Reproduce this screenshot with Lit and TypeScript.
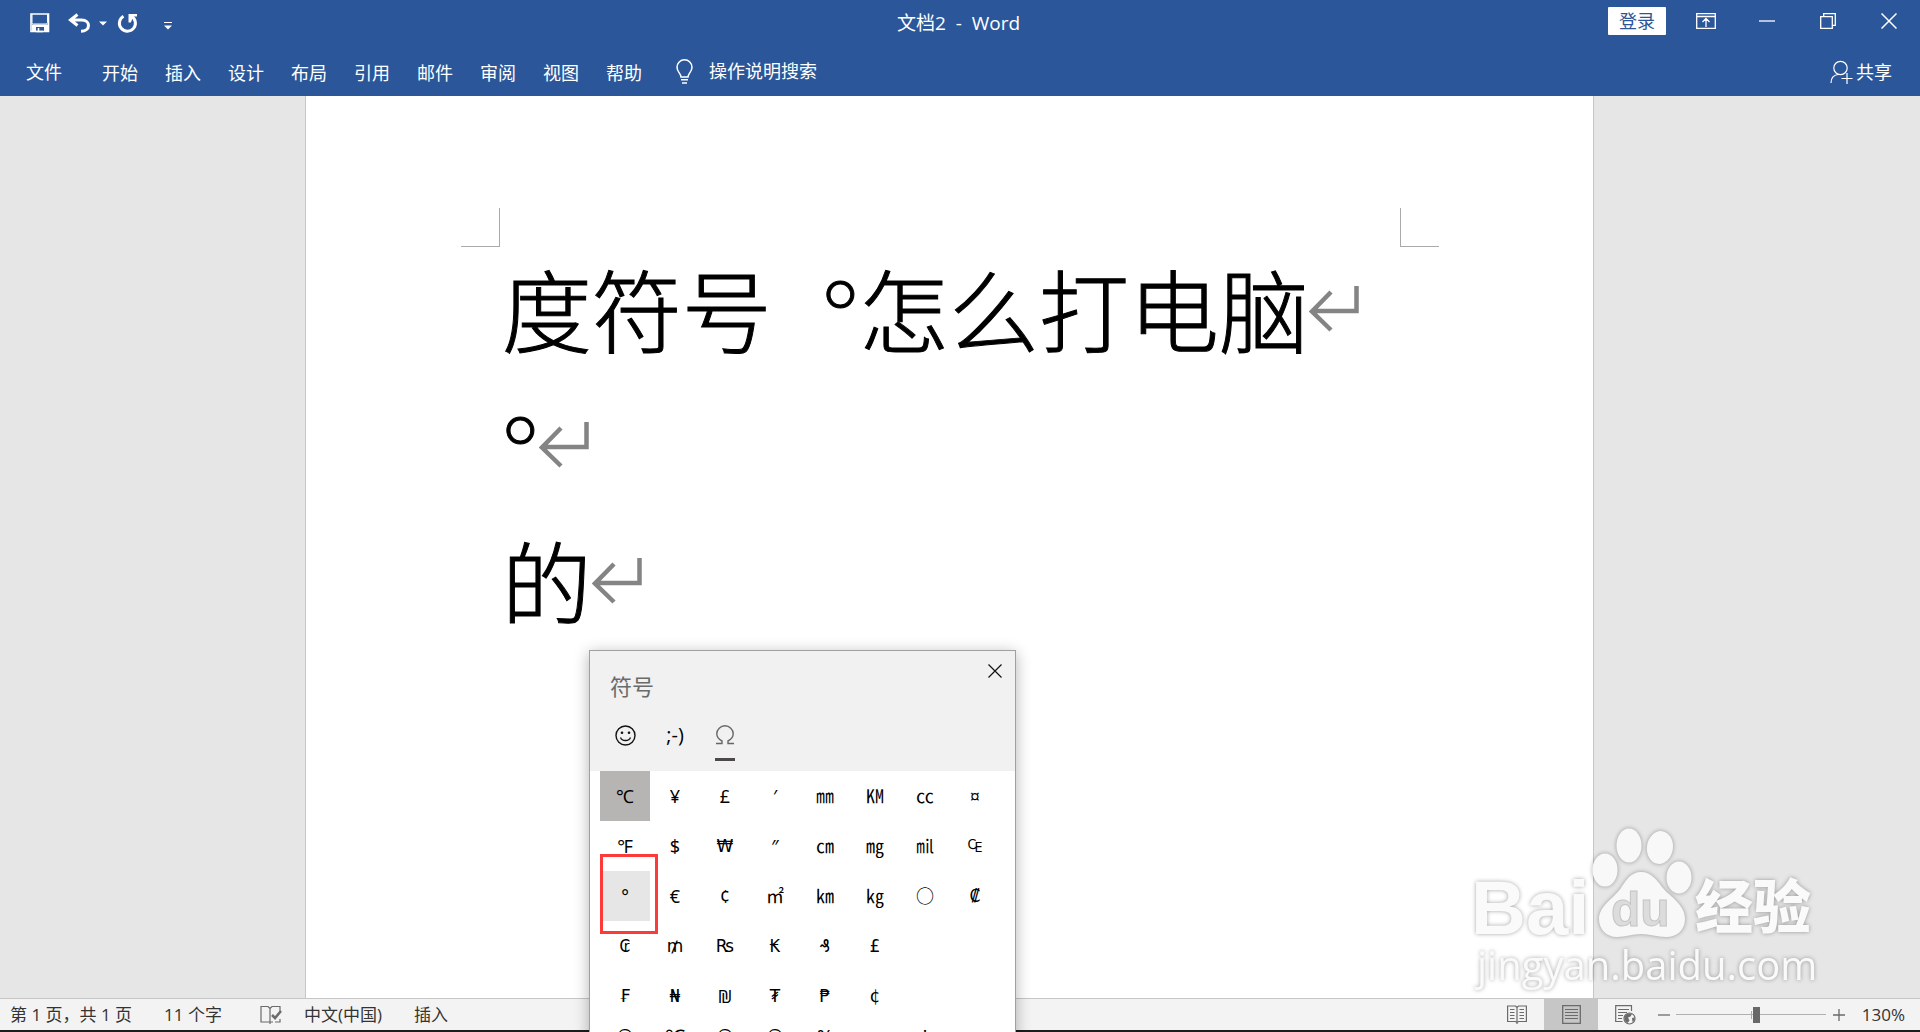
import { LitElement, html, css, svg } from "lit";
import { customElement, property } from "lit/decorators.js";
import { classMap } from "lit/directives/class-map.js";

const MENU = ["开始", "插入", "设计", "布局", "引用", "邮件", "审阅", "视图", "帮助"];

const SYMBOLS: string[][] = [
  ["℃", "¥", "£", "′", "㎜", "㏎", "㏄", "¤"],
  ["℉", "$", "₩", "″", "㎝", "㎎", "㏕", "₠"],
  ["°", "€", "¢", "㎡", "㎞", "㎏", "○", "₡"],
  ["₢", "₥", "₨", "₭", "₰", "£", "", ""],
  ["₣", "₦", "₪", "₮", "₱", "¢", "", ""],
];

const WIDE_SIGNS = "₩₠₡₢₥₨₭₰₣₦₮₱";

const MORE_SYMBOLS = ["©", "℃", "©", "®", "%", "", "'", ""];

const RETURN_MARK = svg`<path d="M47.5 0V25H4M22 6L3 25.5L22 44" fill="none" stroke="#848484" stroke-width="4.5"/>`;

/* Title bar, quick access tools and ribbon tab names */
@customElement("word-header")
export class WordHeader extends LitElement {
  static styles = css`
    :host { display: block; background: #2b579a; color: #fff; }
    button, a, input {
      font: inherit; color: inherit; background: none; border: 0; padding: 0; margin: 0; text-decoration: none;
    }
    button { display: flex; align-items: center; justify-content: center; }
    svg { display: block; fill: none; stroke: #fff; }
    .bar { display: grid; grid-template-columns: 1fr auto 1fr; height: 46px; align-items: center; }
    .quick { display: flex; align-items: center; padding-left: 30px; }
    .undo { margin-left: 18px; }
    .more { margin-left: 8px; }
    .redo { margin-left: 10px; }
    .custom { margin-left: 26px; padding-top: 6px; }
    .title { white-space: pre; font-size: 19px; font-weight: 400; margin: 0; padding-right: 3px; line-height: 24px; }
    .window { display: flex; align-items: center; justify-content: flex-end; height: 42px; align-self: start; padding-right: 1px; }
    .login { background: #fff; color: #2b579a; width: 58px; height: 28px; border-radius: 1px; margin-right: 9px; }
    .win { width: 61px; height: 42px; }
    .tabs { display: flex; height: 50px; align-items: center; padding: 0 28px 0 26px; }
    .menu { display: flex; gap: 27px; margin-left: 40px; padding-top: 4px; }
    .file { padding-top: 2px; }
    .menu a, .file { line-height: 26px; white-space: nowrap; }
    .search { display: flex; align-items: center; gap: 15px; margin-left: 33px; }
    .search input { width: 160px; height: 26px; outline: 0; }
    .search input::placeholder { color: #fff; opacity: 1; }
    .share { display: flex; align-items: center; gap: 3px; margin-left: auto; padding-top: 2px; }
  `;

  render() {
    return html`
      <header class="bar">
        <div class="quick">
          <button aria-label="保存">
            <svg width="20" height="20" viewBox="0 0 20 20">
              <path d="M1 1H18.5V18.5H1Z" stroke-width="1.6" />
              <path d="M2 1V9.500Q2 11 3.500 11H16Q17.500 11 17.500 9.500V1" stroke-width="1" />
              <path d="M2 11.500H18V19H14V14H6V19H2Z" fill="#fff" stroke="none" />
              <path d="M8.500 15V19M6 18.500H13" stroke-width="1.600" />
            </svg>
          </button>
          <button class="undo" aria-label="撤消">
            <svg width="23" height="20" viewBox="0 0 23 20">
              <path d="M9.500 1.500L2.500 7L9.500 12.500M3 7H13.500C18.500 7 20.500 10 20.500 12.500C20.500 16 17.500 18.200 13 18.200" stroke-width="3" />
            </svg>
          </button>
          <button class="more" aria-label="撤消选项">
            <svg width="8" height="5" viewBox="0 0 8 5"><path d="M0 .5H8L4 4.500Z" fill="#fff" stroke="none" /></svg>
          </button>
          <button class="redo" aria-label="重复">
            <svg width="21" height="21" viewBox="0 0 21 21">
              <path d="M6.500 3.200A8 8 0 1 0 14.500 3.300" stroke-width="3" />
              <path d="M11.500 1H20V3.500H16.500L13.800 9.500H11.500Z" fill="#fff" stroke="none" />
            </svg>
          </button>
          <button class="custom" aria-label="自定义快速访问工具栏">
            <svg width="8" height="8" viewBox="0 0 8 8">
              <path d="M0 .5H8" /><path d="M0 3.500H8L4 7.500Z" fill="#fff" stroke="none" />
            </svg>
          </button>
        </div>
        <h1 class="title">文档2  -  Word</h1>
        <div class="window">
          <button class="login">登录</button>
          <button class="win" aria-label="功能区显示选项">
            <svg width="20" height="16" viewBox="0 0 20 16">
              <path d="M.7.700H19.300V15.300H.7ZM.7 3.500H19.300M10 14V6M6.500 9L10 5.500L13.500 9" stroke-width="1.300" />
            </svg>
          </button>
          <button class="win" aria-label="最小化">
            <svg width="16" height="2" viewBox="0 0 16 2"><path d="M0 1H16" stroke-width="1.300" /></svg>
          </button>
          <button class="win" aria-label="还原">
            <svg width="16" height="16" viewBox="0 0 16 16">
              <path d="M.7 3.700H12.300V15.300H.7ZM3.700 3.500V.7H15.300V12.300H12.500" stroke-width="1.300" />
            </svg>
          </button>
          <button class="win" aria-label="关闭">
            <svg width="16" height="16" viewBox="0 0 16 16"><path d="M.5.500L15.500 15.500M15.500.5L.5 15.500" stroke-width="1.500" /></svg>
          </button>
        </div>
      </header>
      <nav class="tabs">
        <a class="file" href="#file">文件</a>
        <div class="menu">${MENU.map((m) => html`<a href="#tab">${m}</a>`)}</div>
        <label class="search">
          <svg width="19" height="25" viewBox="0 0 19 25">
            <path d="M6 18C6 14.500 2 13 2 8.300A7.500 7.500 0 0 1 17 8.300C17 13 13 14.500 13 18ZM6 20.700H13" stroke-width="1.500" />
            <path d="M7 24H12" stroke-width="1.500" />
          </svg>
          <input type="text" placeholder="操作说明搜索" aria-label="操作说明搜索" />
        </label>
        <button class="share">
          <svg width="23" height="24" viewBox="0 0 23 24">
            <circle cx="10.500" cy="8" r="6.700" stroke-width="1.200" />
            <path d="M1 23C1 18 4 15 8 14.500H13" stroke-width="1.200" />
            <path d="M17 13V24M11.500 18.500H22.500" stroke-width="1.200" />
          </svg>
          共享
        </button>
      </nav>
    `;
  }
}

/* White sheet with crop marks and the typed paragraphs */
@customElement("word-document")
export class WordDocument extends LitElement {
  static styles = css`
    :host { display: flex; justify-content: center; background: #e6e6e6; padding-right: 21px; overflow: hidden; }
    .page {
      box-sizing: border-box; width: 67.9%; background: #fff; border: solid #c6c6c6; border-width: 0 1px;
      padding: 112px 154px 0 155px;
    }
    .marks { display: flex; justify-content: space-between; }
    .mark { width: 38px; height: 38px; border: solid #aaa; border-width: 0 1px 1px 0; }
    .mark.right { border-width: 0 0 1px 1px; }
    .text { padding-left: 41px; }
    p {
      margin: 0; display: flex; align-items: flex-start; white-space: pre; color: #000;
      font: 300 90px/136px "Liberation Sans", "Noto Sans CJK SC", sans-serif;
      -webkit-text-stroke: 1px #000;
    }
    .deg { font-family: Lato, sans-serif; line-height: 1; }
    svg { display: block; flex: none; margin-top: 39px; }
  `;

  render() {
    const mark = html`<svg width="50" height="46" viewBox="0 0 50 46">${RETURN_MARK}</svg>`;
    const deg = html`<span class="deg">°</span>`;
    return html`
      <article class="page">
        <div class="marks"><span class="mark"></span><span class="mark right"></span></div>
        <div class="text">
          <p><span>度符号  ${deg}怎么打电脑</span>${mark}</p>
          <p><span>${deg}</span>${mark}</p>
          <p><span>的</span>${mark}</p>
        </div>
      </article>
    `;
  }
}

/* Bottom bar: page info, view switches, zoom */
@customElement("word-status")
export class WordStatus extends LitElement {
  static styles = css`
    :host {
      display: flex; align-items: stretch; height: 31px; background: #f3f3f3; color: #333;
      border-top: 1px solid #c6c6c6; border-bottom: 2px solid #1c1a1c; font-size: 17px; padding: 0 15px 0 10px;
    }
    button { font: inherit; color: inherit; background: none; border: 0; padding: 0; white-space: nowrap; }
    .info { display: flex; align-items: center; gap: 32px; }
    .proof { margin: 0 -10px 0 6px; }
    .tools { display: flex; align-items: stretch; margin-left: auto; }
    .view { width: 54px; display: flex; align-items: center; justify-content: center; }
    .view.on { background: #c6c6c6; }
    .small { width: 12px; margin: 0 6px 0 7px; display: flex; align-items: center; }
    .first { margin-left: 6px; }
    svg { display: block; fill: none; stroke: #6b6b6b; }
    input {
      appearance: none; width: 150px; height: 31px; margin: 0;
      background: linear-gradient(#aaa, #aaa) 75px 50% / 1px 8px no-repeat,
        linear-gradient(#b0b0b0, #b0b0b0) 0 50% / 100% 1px no-repeat;
    }
    input::-webkit-slider-thumb { appearance: none; width: 7px; height: 16px; background: #686868; }
    .zoom { margin-left: 10px; min-width: 44px; text-align: right; }
  `;

  render() {
    return html`
      <div class="info">
        <button>第 1 页，共 1 页</button>
        <button>11 个字</button>
        <button class="proof" aria-label="校对">
          <svg width="22" height="20" viewBox="0 0 22 20">
            <path d="M10 17H1V1.500H8L10 3.500V19M10 3.500L12 1.500H20V6M10 17H13M15 17H20V14" stroke-width="1.200" />
            <path d="M12 10L15 13L21 6" stroke-width="2.600" />
          </svg>
        </button>
        <button>中文(中国)</button>
        <button>插入</button>
      </div>
      <div class="tools">
        <button class="view" aria-label="阅读视图">
          <svg width="20" height="19" viewBox="0 0 20 19">
            <path d="M10 19V2.500M10 2.500L8.500 1H.6V16.500H8.500L10 17.500L11.500 16.500H19.400V1H11.500Z" stroke-width="1.200" />
            <path d="M3 4.500H7.500M3 7.500H7.500M3 10.500H7.500M3 13.500H7.500M12.500 4.500H17M12.500 7.500H17M12.500 10.500H17M12.500 13.500H17" stroke-width="1.200" />
          </svg>
        </button>
        <button class="view on" aria-label="页面视图">
          <svg width="19" height="19" viewBox="0 0 19 19">
            <path d="M.7.700H18.300V18.300H.7Z" stroke-width="1.300" />
            <path d="M3 4.500H16M3 7.500H16M3 10.500H16M3 13.500H16" stroke-width="1.200" />
          </svg>
        </button>
        <button class="view" aria-label="Web 版式视图">
          <svg width="21" height="20" viewBox="0 0 21 20">
            <path d="M7.500 16.500H.7V.7H16.500V6M3 4.500H14M3 7.500H12M3 10.500H8M3 13.500H7" stroke-width="1.200" />
            <circle cx="14.500" cy="13.500" r="5.500" stroke-width="1.200" />
            <path d="M9.500 12C11 8.500 14 8 17 9L15.500 11.500L13 12.500L14.500 15.500L12.500 18C10.500 17 9.200 14.500 9.500 12ZM17 13L19.500 12.500V15L17.500 17Z" fill="#6b6b6b" stroke="none" />
          </svg>
        </button>
        <button class="small first" aria-label="缩小">
          <svg width="12" height="12" viewBox="0 0 12 12"><path d="M0 6H12" stroke-width="1.300" /></svg>
        </button>
        <input type="range" min="0" max="100" value="54" aria-label="显示比例" />
        <button class="small" aria-label="放大">
          <svg width="12" height="12" viewBox="0 0 12 12"><path d="M0 6H12M6 0V12" stroke-width="1.300" /></svg>
        </button>
        <button class="zoom">130%</button>
      </div>
    `;
  }
}

/* Floating symbol picker */
@customElement("symbol-panel")
export class SymbolPanel extends LitElement {
  @property({ attribute: false }) rows: string[][] = SYMBOLS;

  static styles = css`
    :host {
      display: block; box-sizing: border-box; width: 427px; background: #fff; border: 1px solid #a0a0a0;
      box-shadow: 0 3px 14px rgba(0, 0, 0, 0.3); color: #000;
    }
    button { font: inherit; color: inherit; background: none; border: 0; padding: 0; }
    .head { background: #f1f1f1; height: 120px; display: flex; flex-direction: column; justify-content: space-between; }
    .top { display: flex; justify-content: space-between; align-items: flex-start; }
    h2 { margin: 19px 0 0 20px; font-size: 22px; line-height: 32px; font-weight: 400; color: #6a6a6a; }
    .close { width: 40px; height: 40px; display: grid; place-items: center; }
    .kinds { display: flex; padding-left: 10px; }
    .kind { width: 50px; height: 50px; display: flex; flex-direction: column; align-items: center; }
    .kind .pic { height: 28px; display: grid; place-items: center; font-size: 20px; }
    .kind.on::after { content: ""; width: 20px; height: 3px; margin-top: 9px; background: #4c4a48; }
    svg { display: block; fill: none; stroke: #111; }
    .grid {
      display: grid; grid-template-columns: repeat(8, 50px); grid-auto-rows: 50px; padding-left: 10px;
      font: 18px/50px "Noto Sans", "Noto Sans CJK SC", "DejaVu Sans", sans-serif;
    }
    .grid button { text-align: center; }
    .grid .picked { background: #b7b5b3; }
    .grid .hover { background: #e6e6e6; }
    .grid .wide { font-family: "DejaVu Sans", sans-serif; font-size: 17px; }
    .next { font-size: 20px; line-height: 32px; grid-auto-rows: 32px; }
  `;

  render() {
    return html`
      <div class="head">
        <div class="top">
          <h2>符号</h2>
          <button class="close" aria-label="关闭">
            <svg width="14" height="14" viewBox="0 0 14 14"><path d="M.5.500L13.500 13.500M13.500.5L.5 13.500" stroke-width="1.200" /></svg>
          </button>
        </div>
        <div class="kinds">
          <button class="kind" aria-label="表情">
            <span class="pic">
              <svg width="21" height="21" viewBox="0 0 21 21">
                <circle cx="10.500" cy="10.500" r="9.500" stroke-width="1.400" />
                <path d="M5.500 12.500C7 16.500 14 16.500 15.500 12.500" stroke-width="1.300" />
                <circle cx="7" cy="7.800" r="1.300" fill="#111" stroke="none" />
                <circle cx="14" cy="7.800" r="1.300" fill="#111" stroke="none" />
              </svg>
            </span>
          </button>
          <button class="kind" aria-label="颜文字"><span class="pic">;-)</span></button>
          <button class="kind on" aria-label="符号">
            <span class="pic">
              <svg width="20" height="20" viewBox="0 0 20 20">
                <path d="M1 18.500H7V16C4 14.500 1.800 12 1.800 8.800A8.200 8 0 0 1 18.200 8.800C18.200 12 16 14.500 13 16V18.500H19" stroke="#666" stroke-width="1.400" />
              </svg>
            </span>
          </button>
        </div>
      </div>
      <div class="grid">
        ${this.rows.map((row, r) =>
          row.map((s, c) =>
            s
              ? html`<button
                  class=${classMap({
                    picked: r === 0 && c === 0,
                    hover: r === 2 && c === 0,
                    wide: WIDE_SIGNS.includes(s) || (r > 2 && c === 5),
                  })}
                >${s}</button>`
              : html`<span></span>`
          )
        )}
      </div>
      <div class="grid next">
        ${MORE_SYMBOLS.map((s) => (s ? html`<button><span>${s}</span></button>` : html`<span></span>`))}
      </div>
    `;
  }
}

/* Translucent site badge */
@customElement("site-badge")
export class SiteBadge extends LitElement {
  static styles = css`
    :host { display: block; pointer-events: none; }
    svg { display: block; overflow: visible; filter: drop-shadow(0 0 2px rgba(0, 0, 0, 0.35)); }
    text { fill: #fafafa; }
    .brand { font: 700 76px "Liberation Sans", sans-serif; }
    .cn { font: 900 58px "Noto Sans CJK SC", sans-serif; }
    .url { font: 400 40px "Open Sans", sans-serif; }
    .du { font: 700 48px "Liberation Sans", sans-serif; fill: #dcdcdc; stroke: #c4c4c4; stroke-width: 1px; }
  `;

  render() {
    return html`
      <svg width="350" height="180" viewBox="0 0 350 180">
        <text class="brand" x="1" y="114">Bai</text>
        <g fill="#f8f8f8">
          <ellipse cx="135" cy="50" rx="12.500" ry="16.500" />
          <ellipse cx="159" cy="25.500" rx="12.500" ry="17" />
          <ellipse cx="190" cy="27.500" rx="13" ry="16.500" transform="rotate(8 190 27)" />
          <ellipse cx="209" cy="57.500" rx="12.500" ry="16" />
          <path d="M171 52C181 52 187 60 192 67C200 77 215 84 215 99C215 110 207 117 196 117C187 117 180 114 171 114C162 114 156 117 147 117C136 117 129 109 129 99C129 86 143 79 151 68C156 60 161 52 171 52Z" />
        </g>
        <text class="du" x="141" y="106">du</text>
        <text class="cn" x="225" y="108">经验</text>
        <text class="url" x="7" y="160">jingyan.baidu.com</text>
      </svg>
    `;
  }
}

@customElement("app-root")
export class AppRoot extends LitElement {
  static styles = css`
    :host {
      display: flex; flex-direction: column; position: relative; min-height: 100vh; max-height: 100vh; overflow: hidden;
      font: 18px/24px "Open Sans", "Noto Sans CJK SC", sans-serif;
    }
    word-document { flex: 1; min-height: 0; }
    symbol-panel { position: absolute; left: 589px; top: 650px; }
    site-badge { position: absolute; right: 100px; bottom: 32px; }
    .highlight {
      position: absolute; left: 600px; top: 854px; width: 58px; height: 80px; box-sizing: border-box;
      border: 3px solid #fd3a3a; pointer-events: none;
    }
  `;

  render() {
    return html`
      <word-header></word-header>
      <word-document></word-document>
      <word-status></word-status>
      <site-badge></site-badge>
      <symbol-panel></symbol-panel>
      <div class="highlight"></div>
    `;
  }
}
